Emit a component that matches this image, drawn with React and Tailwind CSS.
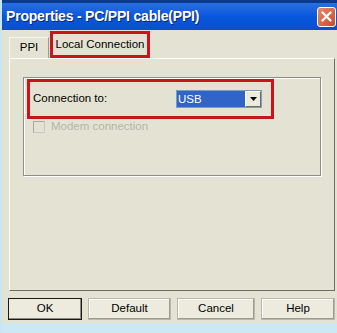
import React from 'react';

const font = { fontFamily: '"Liberation Sans", Arial, sans-serif' };

function XpButton({ children, isDefault }) {
  return (
    <div
      className={`flex items-center justify-center h-[22px] bg-[#ecebde] text-[11.5px] text-black border ${
        isDefault ? 'border-[#1a1a1a] shadow-[inset_-1px_-1px_0_#8a8a80]' : 'border-[#b9b8ab] shadow-[inset_-1px_-1px_0_#9c9b90,inset_1px_1px_0_#ffffff]'
      }`}
    >
      {children}
    </div>
  );
}

export default function App() {
  return (
    <div
      className="w-[337px] h-[333px] bg-[#e4e3d3] flex flex-col overflow-hidden border-l-2 border-[#c6e6f2]"
      style={font}
    >
      {/* title bar */}
      <div className="h-[30px] shrink-0 flex items-center justify-between bg-gradient-to-b from-[#2a6fe0] via-[#0757de] to-[#0a50c8] border-t-[3px] border-[#0b3a8c] pl-[4px] pr-[1px]">
        <span className="text-white font-bold text-[14px] tracking-[-0.2px] [text-shadow:1px_1px_0_#0a2a6a]">
          Properties - PC/PPI cable(PPI)
        </span>
        <div className="w-[19px] h-[20px] rounded-[3px] bg-gradient-to-br from-[#e88a6a] to-[#c9482a] border border-white flex items-center justify-center">
          <svg width="11" height="11" viewBox="0 0 11 11">
            <path d="M1.5 1.5 L9.5 9.5 M9.5 1.5 L1.5 9.5" stroke="white" strokeWidth="2.2" strokeLinecap="round" />
          </svg>
        </div>
      </div>

      {/* tabs */}
      <div className="flex items-end h-[28px] pl-[7px] shrink-0">
        <div className="w-[40px] h-[21px] bg-[#e4e3d3] border border-b-0 border-[#f7f7f0] border-r-[#9a998e] flex items-center justify-center text-[11.5px] text-black">
          PPI
        </div>
        <div className="h-[27px] w-[100px] ml-[1px] border-[3px] border-[#c8141a] flex items-center justify-center">
          <span className="text-[11.5px] text-black">Local Connection</span>
        </div>
      </div>

      {/* tab panel */}
      <div className="mx-[7px] mr-[2px] h-[233px] shrink-0 border border-[#ffffff] border-r-[#6e6d66] border-b-[#6e6d66] pt-[18px] px-[13px]">
        <div className="h-[99px] border border-[#8f8e83] shadow-[inset_1px_1px_0_#ffffff,1px_1px_0_#ffffff] pt-[1px] pl-[3px] pr-[40px]">
          <div className="h-[40px] w-[247px] border-[3px] border-[#c8141a] flex items-center pl-[3px]">
            <span className="text-[11.5px] text-black w-[143px]">Connection to:</span>
            <div className="flex items-center h-[18px] border border-[#7f9db9] bg-white">
              <div className="w-[68px] h-[16px] bg-[#3164c8] text-white text-[11.5px] leading-[16px] pl-[1px]">USB</div>
              <div className="w-[16px] h-[16px] bg-[#ecebde] border border-[#ffffff] border-r-[#6e6d66] border-b-[#6e6d66] flex items-center justify-center">
                <svg width="7" height="4" viewBox="0 0 7 4">
                  <path d="M0 0 H7 L3.5 4 Z" fill="black" />
                </svg>
              </div>
            </div>
          </div>
          <div className="flex items-center mt-[-1px] pl-[6px]">
            <div className="w-[12px] h-[12px] border border-[#c9c8bc] border-l-[#a9a89c] border-t-[#a9a89c]" />
            <span className="ml-[6px] text-[11.5px] text-[#b5b4a8]">Modem connection</span>
          </div>
        </div>
      </div>

      {/* buttons */}
      <div className="grid grid-cols-[74px_83px_78px_74px] gap-x-[6px] px-[6px] mt-[7px] shrink-0">
        <XpButton isDefault>OK</XpButton>
        <XpButton>Default</XpButton>
        <XpButton>Cancel</XpButton>
        <XpButton>Help</XpButton>
      </div>
      <div className="flex-1 mt-[3px] bg-[#cce8f4]" />
    </div>
  );
}
